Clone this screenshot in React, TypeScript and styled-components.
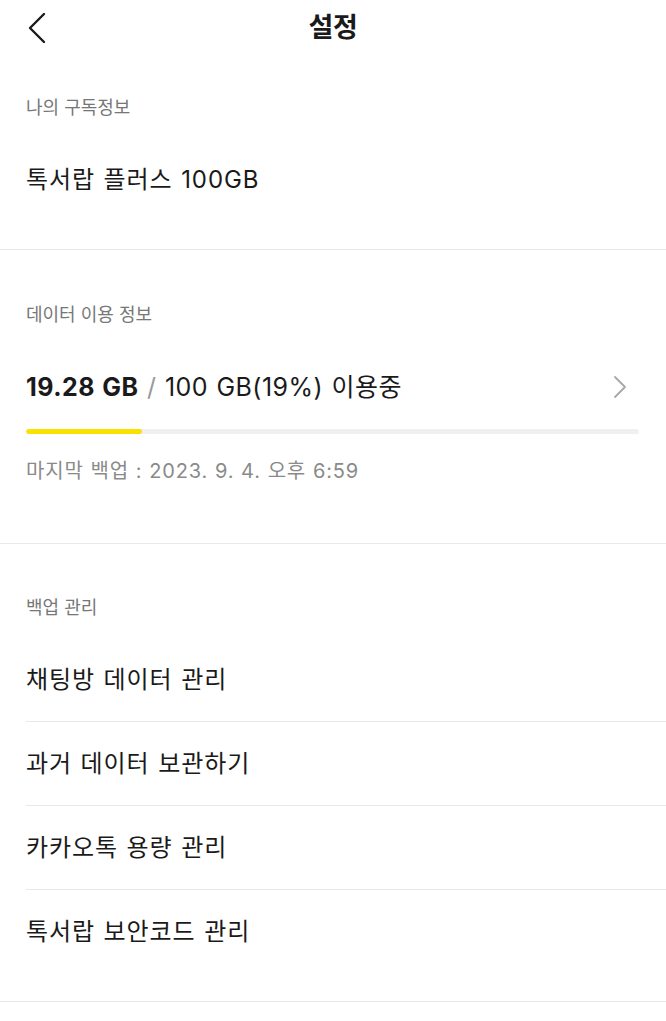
import styled, { createGlobalStyle } from "styled-components";

const GlobalStyle = createGlobalStyle`
  html, body {
    margin: 0;
    padding: 0;
    background: #fff;
  }
  body {
    font-family: Inter, "Noto Sans CJK KR", "Noto Sans", sans-serif;
    color: #1a1a1a;
  }
`;

const usedGB = 19.28;
const totalGB = 100;
const backupItems = [
  "채팅방 데이터 관리",
  "과거 데이터 보관하기",
  "카카오톡 용량 관리",
  "톡서랍 보안코드 관리",
];

function App() {
  const percent = Math.round((usedGB / totalGB) * 100);
  return (
    <Page>
      <GlobalStyle />
      <Header>
        <BackButton aria-label="뒤로">
          <svg width="18" height="32" viewBox="0 0 18 32" fill="none">
            <polyline
              points="16,2 2,16 16,30"
              stroke="#1a1a1a"
              strokeWidth="2.4"
              strokeLinecap="round"
              strokeLinejoin="round"
            />
          </svg>
        </BackButton>
        <Title>설정</Title>
      </Header>

      <Section $top={40}>
        <SectionLabel>나의 구독정보</SectionLabel>
        <Row $last>톡서랍 플러스 100GB</Row>
      </Section>

      <Section $top={53} $bottom={58}>
        <SectionLabel>데이터 이용 정보</SectionLabel>
        <UsageBlock>
          <UsageLine>
            <span>
              <Strong>{usedGB} GB</Strong>
              <Slash> / </Slash>
              {totalGB} GB({percent}%) 이용중
            </span>
            <svg width="14" height="24" viewBox="0 0 14 24" fill="none">
              <polyline
                points="2,2 12,12 2,22"
                stroke="#a8a8a8"
                strokeWidth="1.8"
                strokeLinecap="round"
                strokeLinejoin="round"
              />
            </svg>
          </UsageLine>
          <Track>
            <Fill style={{ width: `${percent}%` }} />
          </Track>
          <BackupInfo>마지막 백업 : 2023. 9. 4. 오후 6:59</BackupInfo>
        </UsageBlock>
      </Section>

      <Section $top={52}>
        <SectionLabel>백업 관리</SectionLabel>
        {backupItems.map((item, i) => (
          <Row key={item} $last={i === backupItems.length - 1}>
            {item}
          </Row>
        ))}
      </Section>
    </Page>
  );
}

export default App;

const Page = styled.div`
  width: 666px;
  min-height: 1021px;
  background: #fff;
`;

const Header = styled.header`
  position: relative;
  height: 56px;
  display: flex;
  align-items: center;
  justify-content: center;
`;

const BackButton = styled.button`
  position: absolute;
  left: 28px;
  top: 12px;
  padding: 0;
  border: none;
  background: none;
  display: flex;
`;

const Title = styled.h1`
  margin: 0;
  font-size: 27px;
  line-height: 36px;
  font-weight: 700;
  letter-spacing: -0.3px;
  color: #1a1a1a;
`;

const Section = styled.section<{ $top: number; $bottom?: number }>`
  padding: ${(p) => p.$top}px 0 ${(p) => p.$bottom ?? 27}px 26px;
  border-bottom: 1px solid #e8e8e8;
`;

const SectionLabel = styled.div`
  font-size: 18px;
  line-height: 24px;
  color: #777;
  margin-bottom: 18px;
`;

const Row = styled.div<{ $last?: boolean }>`
  height: 84px;
  box-sizing: border-box;
  display: flex;
  align-items: center;
  font-size: 24px;
  line-height: 34px;
  letter-spacing: 0.9px;
  word-spacing: 1px;
  color: #1a1a1a;
  border-bottom: ${(p) => (p.$last ? "none" : "1px solid #e8e8e8")};
`;

const UsageBlock = styled.div`
  padding-top: 25px;
  padding-right: 27px;
`;

const UsageLine = styled.div`
  display: flex;
  align-items: center;
  justify-content: space-between;
  height: 34px;
  font-size: 25px;
  line-height: 34px;
  letter-spacing: 0.45px;
  word-spacing: 1px;
  color: #1a1a1a;

  svg {
    margin-right: 12px;
  }
`;

const Strong = styled.strong`
  font-weight: 700;
`;

const Slash = styled.span`
  color: #999;
`;

const Track = styled.div`
  margin-top: 25px;
  height: 5px;
  border-radius: 3px;
  background: #f0f0f0;
  overflow: hidden;
`;

const Fill = styled.div`
  height: 100%;
  border-radius: 3px;
  background: #fae100;
`;

const BackupInfo = styled.div`
  margin-top: 23px;
  font-size: 20px;
  line-height: 28px;
  letter-spacing: 0.8px;
  word-spacing: 0.5px;
  color: #8a8a8a;
`;
